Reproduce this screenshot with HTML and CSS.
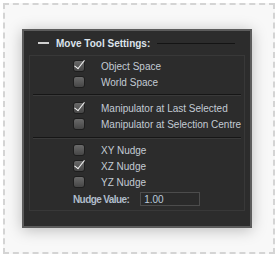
FILE: index.html
```html
<!DOCTYPE html>
<html lang="en">
<head>
    <meta charset="UTF-8">
    <title>Move Tool Settings</title>
    <link rel="stylesheet" href="styles.css">
</head>
<body>

<div class="frame">
    <div class="panel">
        <div class="panel-header">
            <span class="collapse-icon"></span>
            <span class="panel-title">Move Tool Settings:</span>
            <span class="header-line"></span>
        </div>

        <div class="group-box">
            <label class="option-row"><span class="checkbox checked"></span>Object Space</label>
            <label class="option-row"><span class="checkbox"></span>World Space</label>

            <div class="divider first"></div>

            <label class="option-row"><span class="checkbox checked"></span>Manipulator at Last Selected</label>
            <label class="option-row"><span class="checkbox"></span>Manipulator at Selection Centre</label>

            <div class="divider second"></div>

            <label class="option-row"><span class="checkbox"></span>XY Nudge</label>
            <label class="option-row"><span class="checkbox checked"></span>XZ Nudge</label>
            <label class="option-row"><span class="checkbox"></span>YZ Nudge</label>

            <div class="value-row">
                <span class="value-label">Nudge Value:</span>
                <input class="value-input" type="text" value="1.00">
            </div>
        </div>
    </div>
</div>

</body>
</html>
```

FILE: styles.css
```css
body {
    margin: 0;
    padding: 0;
    background: #fff;
    font-family: 'Liberation Sans', Arial, sans-serif;
    font-size: 10px;
}
.frame {
    margin: 3px;
    width: 251px;
    height: 223px;
    border: 2px dashed #d4d4d4;
    background: #f8f8f8;
    padding: 24px 0 0 17px;
}
.panel {
    width: 230px;
    height: 199px;
    box-sizing: border-box;
    background-color: #2c2c2c;
    border: 2px solid #5c5c5c;
    box-shadow: 0 2px 14px rgba(0, 0, 0, 0.25);
    padding: 0 5px;
}
.panel-header {
    display: flex;
    align-items: center;
    height: 24px;
    padding: 0 10px 0 9px;
}
.collapse-icon {
    width: 11px;
    height: 2px;
    background-color: #d0d0d0;
    flex-shrink: 0;
}
.panel-title {
    margin-left: 7px;
    font-weight: bold;
    color: #dde4ec;
    white-space: nowrap;
}
.header-line {
    flex: 1;
    margin-left: 7px;
    height: 1px;
    background-color: #141414;
}
.group-box {
    border: 1px solid #383838;
    height: 156px;
    box-sizing: border-box;
    padding-top: 2px;
}
.option-row {
    display: flex;
    align-items: center;
    height: 16px;
    padding-left: 43px;
    color: #c3cbd4;
    white-space: nowrap;
}
.checkbox {
    width: 12px;
    height: 12px;
    box-sizing: border-box;
    border: 1px solid #1e1e1e;
    border-radius: 3px;
    background: linear-gradient(#6a6a6a, #464646);
    margin-right: 16px;
    position: relative;
    flex-shrink: 0;
}
.checkbox.checked::after {
    content: "";
    position: absolute;
    left: 3px;
    top: -3px;
    width: 4px;
    height: 10px;
    border-right: 1.5px solid #f4f4f4;
    border-bottom: 1.5px solid #f4f4f4;
    transform: rotate(38deg);
}
.divider {
    height: 1px;
    margin: 0 3px;
    background-color: #161616;
    border-bottom: 1px solid #3a3a3a;
}
.divider.first {
    margin-top: 4px;
    margin-bottom: 4px;
}
.divider.second {
    margin-top: 5px;
    margin-bottom: 3px;
}
.value-row {
    display: flex;
    align-items: center;
    height: 18px;
    padding-left: 43px;
}
.value-label {
    font-weight: bold;
    letter-spacing: -0.6px;
    color: #b0bdcb;
    margin-right: 11px;
    white-space: nowrap;
}
.value-input {
    width: 60px;
    height: 14px;
    box-sizing: border-box;
    background-color: #2a2a2a;
    border: 1px solid #4c4c4c;
    color: #bccbdc;
    font-family: inherit;
    font-size: 10px;
    padding: 0 3px;
    margin: 0;
    outline: none;
}
```
